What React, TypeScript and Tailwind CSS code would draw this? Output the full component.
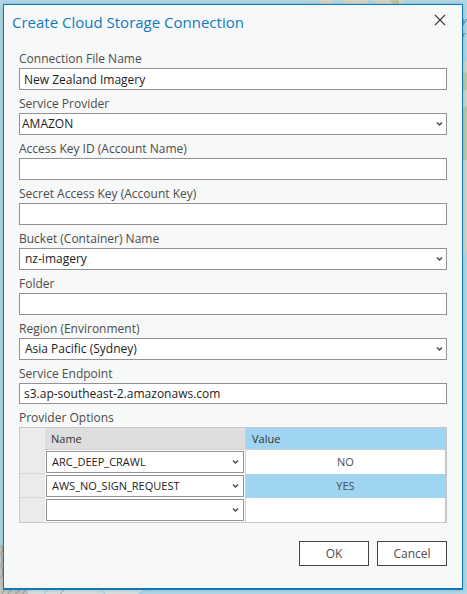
import { ReactNode } from "react";

const labelClass = "block text-[12px] leading-[18px] text-[#4c4c4c]";
const boxClass = "block w-full rounded-none border border-[#929292] bg-white text-[12px] leading-[18px] text-[#1c1c1c] outline-none";

function Chevron({ place }: { place: string }) {
  return (
    <svg className={`pointer-events-none absolute top-1/2 h-[5px] w-[7px] -translate-y-1/2 ${place}`} viewBox="0 0 7 5" fill="none" aria-hidden="true">
      <path d="M1 1 L3.5 3.5 L6 1" stroke="#4c4c4c" strokeWidth="1.5" />
    </svg>
  );
}

function Field({ id, label, children }: { id: string; label: string; children: ReactNode }) {
  return (
    <div>
      <label htmlFor={id} className={labelClass}>{label}</label>
      {children}
    </div>
  );
}

function TextField({ id, label, value, height = "h-[22px]" }: { id: string; label: string; value: string; height?: string }) {
  return (
    <Field id={id} label={label}>
      <input id={id} type="text" defaultValue={value} className={`${boxClass} ${height} px-1`} />
    </Field>
  );
}

function SelectField({ id, label, value, indent }: { id: string; label: string; value: string; indent: string }) {
  return (
    <Field id={id} label={label}>
      <div className="relative">
        <select id={id} defaultValue={value} className={`${boxClass} h-[22px] appearance-none pr-5 ${indent}`}>
          <option>{value}</option>
        </select>
        <Chevron place="right-1" />
      </div>
    </Field>
  );
}

const options = [
  { name: "ARC_DEEP_CRAWL", value: "NO", selected: false },
  { name: "AWS_NO_SIGN_REQUEST", value: "YES", selected: true },
  { name: "", value: "", selected: false },
];

function MapBackdrop() {
  return (
    <svg className="absolute inset-0 h-full w-full" viewBox="0 0 467 594" preserveAspectRatio="none" aria-hidden="true">
      <rect width="467" height="594" fill="#b3d9e8" />
      <path d="M317 0 L322 4 H331 L334 0Z M343 0 L346 4 H366 L369 0Z M372 0 L378 4 H402 L404 0Z" fill="#d9d9cb" />
      <path d="M390 0 h9 v4 h-6z" fill="#bccaa0" />
      <path d="M467 61 L462 62 V265 L467 248Z" fill="#d3d9cb" />
      <path d="M467 72 L462 74 V90 H467Z M467 105 L462 110 V160 H467Z" fill="#bccbaa" />
      <path d="M0 545 L4 550 V589 H145 L135 594 H0Z" fill="#c9c7bd" />
      <path d="M28 589 H147 L138 594 H28Z" fill="#dce1df" />
      <path d="M1 545 l2 4 l-2 5 l2 6 l-2 5 l2 7 l-2 6 M2 594 l2 -4 M8 594 l3 -4 M15 594 l5 -4 M23 594 l2 -4 M60 594 l4 -4" stroke="#9b9c94" fill="none" />
      <path d="M44 594 l5 -4 M100 590 l5 4 M138 594 l9 -4" stroke="#a2cfe2" fill="none" />
      <text x="462" y="24" className="font-['Open_Sans'] text-[9px] font-semibold italic" fill="#4e93ab">y</text>
      <text x="457" y="38" className="font-['Open_Sans'] text-[9px] font-semibold italic" fill="#4e93ab">er</text>
    </svg>
  );
}

export default function App() {
  return (
    <div className="relative min-h-screen overflow-hidden pt-1 pr-1 pb-1 pl-[3px] font-['Open_Sans','Noto_Sans',sans-serif]">
      <MapBackdrop />
      <form className="relative border border-b-2 border-[#0f79b8] bg-[#f7f9f8] px-[15px] pb-[22px] shadow-[0_0_5px_rgba(30,90,120,0.3)]" onSubmit={(e) => e.preventDefault()}>
        <header className="flex h-[45px] items-start justify-between pt-1">
          <h1 className="-ml-[7px] text-[15px] leading-[26px] text-[#0f79c4]">Create Cloud Storage Connection</h1>
          <button type="button" aria-label="Close" className="mt-1 flex size-[14px] items-center justify-center">
            <svg className="size-[12px]" viewBox="0 0 12 12" fill="none" aria-hidden="true">
              <path d="M1 1 L11 11 M11 1 L1 11" stroke="#404040" strokeWidth="1.2" />
            </svg>
          </button>
        </header>

        <div className="flex flex-col gap-[5px]">
          <TextField id="file" label="Connection File Name" value="New Zealand Imagery" />
          <SelectField id="provider" label="Service Provider" value="AMAZON" indent="pl-0.5" />
          <TextField id="key" label="Access Key ID (Account Name)" value="" />
          <TextField id="secret" label="Secret Access Key (Account Key)" value="" />
          <SelectField id="bucket" label="Bucket (Container) Name" value="nz-imagery" indent="pl-[5px]" />
          <TextField id="folder" label="Folder" value="" />
          <SelectField id="region" label="Region (Environment)" value="Asia Pacific (Sydney)" indent="pl-[5px]" />
          <TextField id="endpoint" label="Service Endpoint" value="s3.ap-southeast-2.amazonaws.com" height="h-[21px]" />

          <section>
            <h2 id="options" className={labelClass}>Provider Options</h2>
            <div className="border border-r-2 border-[#c8c8c8]">
              <table aria-labelledby="options" className="w-full table-fixed border-separate border-spacing-0 text-[11px] leading-[16px] text-[#4c4c4c]">
                <colgroup>
                  <col className="w-[25px]" />
                  <col className="w-[201px]" />
                  <col />
                </colgroup>
                <thead>
                  <tr className="h-[22px]">
                    <td className="bg-[#ebebeb] p-0" />
                    <th scope="col" className="border-r border-b border-[#cfcfcf] bg-[#dedede] p-0 pl-1.5 text-left font-normal text-[#333]">Name</th>
                    <th scope="col" className="border-b border-[#cfcfcf] bg-[#9fd4f2] p-0 pl-1.5 text-left font-normal text-[#333]">Value</th>
                  </tr>
                </thead>
                <tbody>
                  {options.map((o, i) => (
                    <tr key={i} className="group h-6">
                      <td className="border-b border-[#d8d8d8] bg-[#ebebeb] p-0 group-last:border-b-0" />
                      <td className="border-r border-[#cfcfcf] bg-white p-0 px-px">
                        <div className="relative">
                          <select aria-label={`Option ${i + 1}`} defaultValue={o.name} className="block h-[22px] w-full appearance-none rounded-none border border-[#929292] bg-white pr-5 pl-[5px] text-[11px] text-[#1c1c1c] outline-none">
                            <option>{o.name}</option>
                          </select>
                          <Chevron place="right-[5px]" />
                        </div>
                      </td>
                      <td className={o.selected ? "bg-[#9fd4f2] p-0 text-center" : "bg-white p-0 text-center"}>{o.value}</td>
                    </tr>
                  ))}
                </tbody>
              </table>
            </div>
          </section>
        </div>

        <footer className="mt-[18px] flex justify-end gap-2">
          <button type="submit" className="h-[25px] w-[70px] border border-[#444] bg-white text-[12px] leading-[18px] text-[#4c4c4c]">OK</button>
          <button type="button" className="h-[25px] w-[70px] border border-[#444] bg-white text-[12px] leading-[18px] text-[#4c4c4c]">Cancel</button>
        </footer>
      </form>
    </div>
  );
}
